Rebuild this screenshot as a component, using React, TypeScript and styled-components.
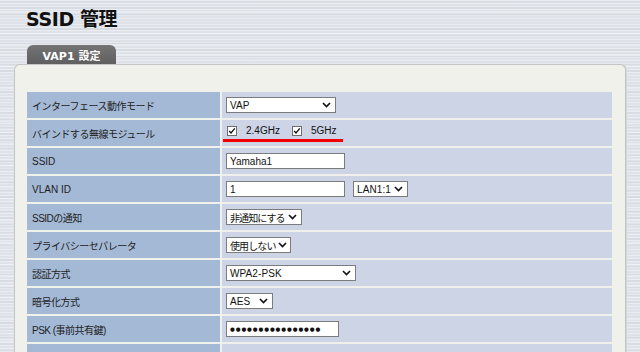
import styled, { createGlobalStyle } from "styled-components";

const GlobalStyle = createGlobalStyle`
  html, body {
    margin: 0;
    padding: 0;
  }
  body {
    font-family: "Liberation Sans", "Noto Sans CJK JP", sans-serif;
    color: #1c1c1c;
  }
`;

type Row = {
  label: string;
  kind: "select" | "checks" | "input" | "vlan" | "password" | "empty";
  value?: string;
  width?: number;
};

const rows: Row[] = [
  { label: "インターフェース動作モード", kind: "select", value: "VAP", width: 110 },
  { label: "バインドする無線モジュール", kind: "checks" },
  { label: "SSID", kind: "input", value: "Yamaha1" },
  { label: "VLAN ID", kind: "vlan", value: "1" },
  { label: "SSIDの通知", kind: "select", value: "非通知にする", width: 76 },
  { label: "プライバシーセパレータ", kind: "select", value: "使用しない", width: 65 },
  { label: "認証方式", kind: "select", value: "WPA2-PSK", width: 130 },
  { label: "暗号化方式", kind: "select", value: "AES", width: 47 },
  { label: "PSK (事前共有鍵)", kind: "password", value: "●●●●●●●●●●●●●●●●" },
  { label: "", kind: "empty" },
];

// 日本語が入る文字列は少し詰める
const hasCjk = (s: string) => /[^\x00-\x7f]/.test(s);

function Chevron() {
  return (
    <svg width="9" height="6" viewBox="0 0 9 6">
      <path d="M1 1 L4.5 4.5 L8 1" fill="none" stroke="#111" strokeWidth="1.6" />
    </svg>
  );
}

function Select({ value, width }: { value: string; width: number }) {
  return (
    <SelectBox $width={width} $cjk={hasCjk(value)}>
      <span>{value}</span>
      <Chevron />
    </SelectBox>
  );
}

function Check({ label }: { label: string }) {
  return (
    <CheckItem>
      <CheckBox>
        <svg width="8" height="8" viewBox="0 0 8 8">
          <path d="M1.2 4 L3 6 L6.8 1.4" fill="none" stroke="#111" strokeWidth="1.3" />
        </svg>
      </CheckBox>
      {label}
    </CheckItem>
  );
}

function renderValue(row: Row) {
  switch (row.kind) {
    case "select":
      return <Select value={row.value!} width={row.width!} />;
    case "checks":
      return (
        <CheckGroup>
          <Check label="2.4GHz" />
          <Check label="5GHz" />
        </CheckGroup>
      );
    case "input":
      return <TextInput readOnly value={row.value} $width={119} />;
    case "vlan":
      return (
        <>
          <TextInput readOnly value={row.value} $width={119} />
          <Select value="LAN1:1" width={55} />
        </>
      );
    case "password":
      return <PasswordBox>{row.value}</PasswordBox>;
    default:
      return null;
  }
}

export default function App() {
  return (
    <Page>
      <GlobalStyle />
      <Title>SSID 管理</Title>
      <Tab>VAP1 設定</Tab>
      <Panel>
        <FormGrid>
          {rows.map((row, i) => (
            <FormRow key={i}>
              <LabelCell $cjk={hasCjk(row.label)}>{row.label}</LabelCell>
              <ValueCell $top={row.kind === "checks"}>{renderValue(row)}</ValueCell>
            </FormRow>
          ))}
        </FormGrid>
      </Panel>
    </Page>
  );
}

const Page = styled.div`
  width: 640px;
  height: 352px;
  overflow: hidden;
  background-color: #dfe3e9;
  background-image:
    repeating-linear-gradient(180deg, rgba(255, 255, 255, 0.35) 0 1px, transparent 1px 3px),
    repeating-linear-gradient(180deg, rgba(120, 130, 145, 0.08) 0 2px, transparent 2px 7px),
    repeating-linear-gradient(180deg, rgba(255, 255, 255, 0.25) 0 1px, transparent 1px 11px);
  display: flex;
  flex-direction: column;
`;

const Title = styled.h1`
  margin: 8px 0 0 26px;
  font-family: "DejaVu Sans", "Noto Sans CJK JP", sans-serif;
  font-size: 19px;
  font-weight: bold;
  line-height: 23px;
  color: #111;
  letter-spacing: -0.4px;
`;

const Tab = styled.div`
  align-self: flex-start;
  margin: 14px 0 0 27px;
  width: 89px;
  height: 23px;
  box-sizing: border-box;
  padding-top: 4px;
  border-radius: 6px 6px 0 0;
  background: linear-gradient(180deg, #747474, #5f5f5f);
  color: #fff;
  font-family: "DejaVu Sans", "Noto Sans CJK JP", sans-serif;
  font-size: 11px;
  font-weight: bold;
  text-align: center;
  line-height: 15px;
`;

const Panel = styled.div`
  margin-left: 14px;
  width: 612px;
  box-sizing: border-box;
  flex: 1;
  padding: 27px 13px 0 12px;
  background: #f1f1ec;
  border: 1px solid #c3c4c4;
  border-bottom: none;
  border-radius: 6px 6px 0 0;
  box-shadow: 1px 0 0 #d2d4d6;
`;

const FormGrid = styled.div`
  display: flex;
  flex-direction: column;
  gap: 2px;
`;

const FormRow = styled.div`
  display: grid;
  grid-template-columns: 193px 1fr;
  column-gap: 2px;
  height: 26px;
`;

const LabelCell = styled.div<{ $cjk?: boolean }>`
  display: flex;
  align-items: center;
  padding-left: 5px;
  background: #a4b9d5;
  font-size: 10px;
  letter-spacing: ${(p) => (p.$cjk ? "-0.5px" : "0")};
  color: #1e1e1e;
  white-space: nowrap;
`;

const ValueCell = styled.div<{ $top?: boolean }>`
  display: flex;
  align-items: ${(p) => (p.$top ? "flex-start" : "center")};
  gap: 8px;
  padding-left: 4px;
  padding-top: ${(p) => (p.$top ? "5px" : "0")};
  background: #ccd4e6;
  font-size: 10px;
`;

const SelectBox = styled.div<{ $width: number; $cjk?: boolean }>`
  width: ${(p) => p.$width}px;
  height: 16px;
  box-sizing: border-box;
  display: flex;
  align-items: center;
  justify-content: space-between;
  padding: 0 4px 0 3px;
  background: #fff;
  border: 1px solid #7c7c7c;
  font-size: 10px;
  letter-spacing: ${(p) => (p.$cjk ? "-0.9px" : "0.1px")};
  color: #111;
  white-space: nowrap;

  svg {
    flex-shrink: 0;
    margin-left: 2px;
  }
`;

const TextInput = styled.input<{ $width: number }>`
  width: ${(p) => p.$width}px;
  height: 16px;
  box-sizing: border-box;
  margin: 0;
  padding: 0 3px;
  border: 1px solid #7c7c7c;
  border-radius: 0;
  background: #fff;
  font-family: "Liberation Sans", sans-serif;
  font-size: 10px;
  color: #111;
  outline: none;
`;

const PasswordBox = styled.div`
  width: 113px;
  height: 16px;
  box-sizing: border-box;
  padding: 0 3px;
  display: flex;
  align-items: center;
  background: #fff;
  border: 1px solid #7c7c7c;
  font-family: "DejaVu Sans", sans-serif;
  font-size: 5.5px;
  letter-spacing: 0.9px;
  color: #111;
  overflow: hidden;
`;

const CheckGroup = styled.div`
  display: flex;
  align-items: center;
  gap: 12px;
  margin-left: -3px;
  padding: 0 7px 3px 4px;
  border-bottom: 3px solid #f00000;
`;

const CheckItem = styled.label`
  display: flex;
  align-items: center;
  gap: 9px;
  font-size: 10px;
  color: #111;
`;

const CheckBox = styled.span`
  width: 10px;
  height: 10px;
  box-sizing: border-box;
  display: flex;
  align-items: center;
  justify-content: center;
  background: #fff;
  border: 1px solid #6e6e6e;
`;
